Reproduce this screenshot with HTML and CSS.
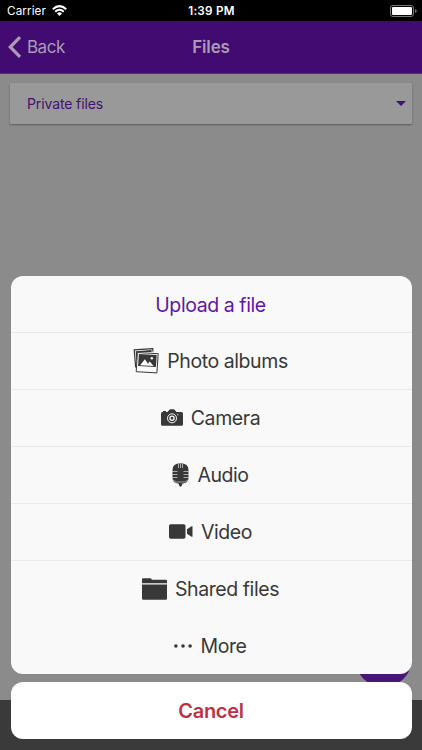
FILE: index.html
```html
<!DOCTYPE html>
<html lang="en">
<head>
<meta charset="utf-8">
<title>Files</title>
<link rel="stylesheet" href="styles.css">
</head>
<body>
<div class="screen">
  <header class="status">
    <div class="carrier"><span>Carrier</span>
      <svg width="15" height="11" viewBox="0 0 15 11" fill="none" stroke="#fff" stroke-width="2"><path d="M.8 4.2Q7.5-2 14.2 4.2M3.2 6.7Q7.5 2.7 11.8 6.7"/><path d="M5 8.4Q7.5 6.2 10 8.4L7.5 11Z" fill="#fff" stroke="none"/></svg>
    </div>
    <time>1:39 PM</time>
    <svg class="battery" width="27" height="12" viewBox="0 0 27 12"><rect x=".5" y=".5" width="23" height="11" rx="2.5" fill="none" stroke="#777"/><rect x="2" y="2" width="20" height="8" rx="1" fill="#fff"/><path d="M25 4Q26.7 4.5 26.7 6T25 8Z" fill="#777"/></svg>
  </header>
  <nav class="navbar">
    <div class="back"><svg width="14" height="22" viewBox="0 0 14 22"><path d="M12 1.2 2.3 11l9.7 9.800" fill="none" stroke="#a99bb5" stroke-width="3.2"/></svg><span>Back</span></div>
    <h1>Files</h1>
    <span></span>
  </nav>
  <main class="content">
    <div class="select"><span>Private files</span><i class="caret"></i></div>
  </main>
  <footer class="tabs"></footer>
  <div class="fab"></div>
  <section class="actions">
    <div class="sheet">
      <h2 class="row title">Upload a file</h2>
      <button class="row photo"><svg width="26" height="26" viewBox="0 0 26 26"><path d="M2.7 19.5 1.2 1.900l18.500-1.300.3 3" fill="none" stroke="#383838" stroke-width="1.2"/><path d="M3.700 18 2.700 3.300l15.800-1.200.2 1.900L4.300 4.100Z" fill="#383838"/><path d="m4.400 4.500 20.800 1.200-1.300 19.200-20.700-1.200Z" fill="#fafafa" stroke="#383838"/><path d="m5.900 6 17.800 1.100-.8 12-17.800-1Z" fill="#383838"/><path d="m7.100 17.300 4.800-6 3 4.500 1.900-2.300 3.800 4.500Z" fill="#fafafa"/><circle cx="18.800" cy="10.300" r="1.200" fill="#fafafa"/></svg><span>Photo albums</span></button>
      <button class="row camera"><svg width="22" height="17" viewBox="0 0 22 17"><path d="M1.500 3H2V2h3v1h1.500L8.400.700Q8.800.200 9.500.200h3q.700 0 1.100.500L15.500 3h5Q22 3 22 4.500v10.700q0 1.500-1.500 1.500h-19Q0 16.700 0 15.200V4.500Q0 3 1.500 3Z" fill="#383838"/><circle cx="11" cy="9.300" r="4.500" fill="none" stroke="#fafafa" stroke-width="1"/><circle cx="11" cy="9.300" r="2.100" fill="none" stroke="#fafafa" stroke-width="1.300"/><circle cx="16.800" cy="5.700" r=".6" fill="#fafafa"/></svg><span>Camera</span></button>
      <button class="row audio"><svg width="17" height="24" viewBox="0 0 17 24"><path d="M.5 7Q.5.300 8.500.300T16.500 7v8q0 5-6.300 5.700V22L8.500 24 6.800 22v-1.300Q.5 20 .5 15Z" fill="#383838"/><path d="M0 8.500h5.500M0 11.500h5.500M0 14.500h5.500M11.500 8.500H17M11.500 11.500H17M11.500 14.500H17M6.500 1v4M8.500.500V5M10.500 1v4" stroke="#ccc" stroke-width=".8"/><path d="M1 17 4.500 19h8L16 17" fill="none" stroke="#aaa" stroke-width=".9"/></svg><span>Audio</span></button>
      <button class="row video"><svg width="24" height="15" viewBox="0 0 24 15" fill="#383838"><rect y=".3" width="16.500" height="14.400" rx="1.700"/><path d="M18 5.300 22.500 2.300H23.500V12.800H22.500L18 9.800Z"/></svg><span>Video</span></button>
      <button class="row shared"><svg width="25" height="22" viewBox="0 0 25 22" fill="#383838"><path d="M0 5.200V1.200Q0 .200 1 .200H8.500Q9.300.200 9.500 1L9.700 1.800H24Q25 1.800 25 2.800V5.200ZM0 6.400H25V20.500Q25 21.700 23.800 21.700H1.200Q0 21.700 0 20.500Z"/></svg><span>Shared files</span></button>
      <button class="row more"><svg width="18" height="4" viewBox="0 0 18 4" fill="#383838"><circle cx="1.900" cy="2" r="1.800"/><circle cx="9" cy="2" r="1.800"/><circle cx="16.100" cy="2" r="1.800"/></svg><span>More</span></button>
    </div>
    <button class="cancel">Cancel</button>
  </section>
</div>
</body>
</html>
```
FILE: styles.css
```css
* { box-sizing: border-box; }
body { margin: 0; font-family: Inter, "Liberation Sans", sans-serif; }
h1, h2 { margin: 0; }
button { border: 0; padding: 0; margin: 0; font-family: inherit; }
svg { display: block; flex: none; }
.screen { position: relative; width: 422px; height: 750px; overflow: hidden; display: flex; flex-direction: column; background: #8b8b8b; }
.status { height: 21px; flex: none; background: #000; color: #fff; display: grid; grid-template-columns: 1fr auto 1fr; align-items: center; padding: 0 6px 0 7px; font-size: 11.7px; }
.carrier { display: flex; align-items: center; gap: 6px; letter-spacing: .1px; }
.status time { font-weight: 600; letter-spacing: .25px; }
.battery { justify-self: end; margin-right: -1px; }
.navbar { height: 53px; flex: none; background: #420b72; border-bottom: 1px solid #55336f; color: #a99bb5; display: grid; grid-template-columns: 1fr auto 1fr; align-items: center; padding: 0 8px; }
.back { display: flex; align-items: center; gap: 5px; font-size: 17px; letter-spacing: -.5px; }
.navbar h1 { font-size: 17px; font-weight: 600; letter-spacing: -.15px; }
.content { flex: 1; padding: 9px 10px; }
.select { height: 41px; background: #999; box-shadow: 0 1px 2px rgba(0,0,0,.35); display: flex; align-items: center; justify-content: space-between; padding: 0 6px 0 17px; font-size: 14px; letter-spacing: -.12px; color: #441173; border-radius: 1px; }
.caret { border: 5px solid transparent; border-top-color: #441173; border-bottom: 0; }
.tabs { height: 50px; flex: none; background: #3a3a3a; }
.fab { position: absolute; left: 355px; top: 630px; width: 57px; height: 57px; border-radius: 50%; background: #481578; }
.actions { position: absolute; left: 10.5px; right: 10.5px; top: 276px; display: flex; flex-direction: column; gap: 8px; }
.sheet { display: flex; flex-direction: column; height: 398px; border-radius: 12px; overflow: hidden; background: #f9f9f9; }
.row { width: 100%; height: 57px; flex: none; display: flex; align-items: center; justify-content: center; gap: 8px; background: transparent; border-bottom: 1px solid #ebebeb; color: #383838; font-size: 19.5px; font-weight: 400; letter-spacing: -.42px; padding-right: 1px; }
.title { height: 56.5px; padding-top: 2px; color: #5e17a3; }
.shared, .more { border-bottom-color: transparent; }
.cancel { height: 57px; border-radius: 12px; background: #fff; color: #bd3246; font-size: 20px; font-weight: 600; letter-spacing: -.3px; padding-top: 1px; }
```
